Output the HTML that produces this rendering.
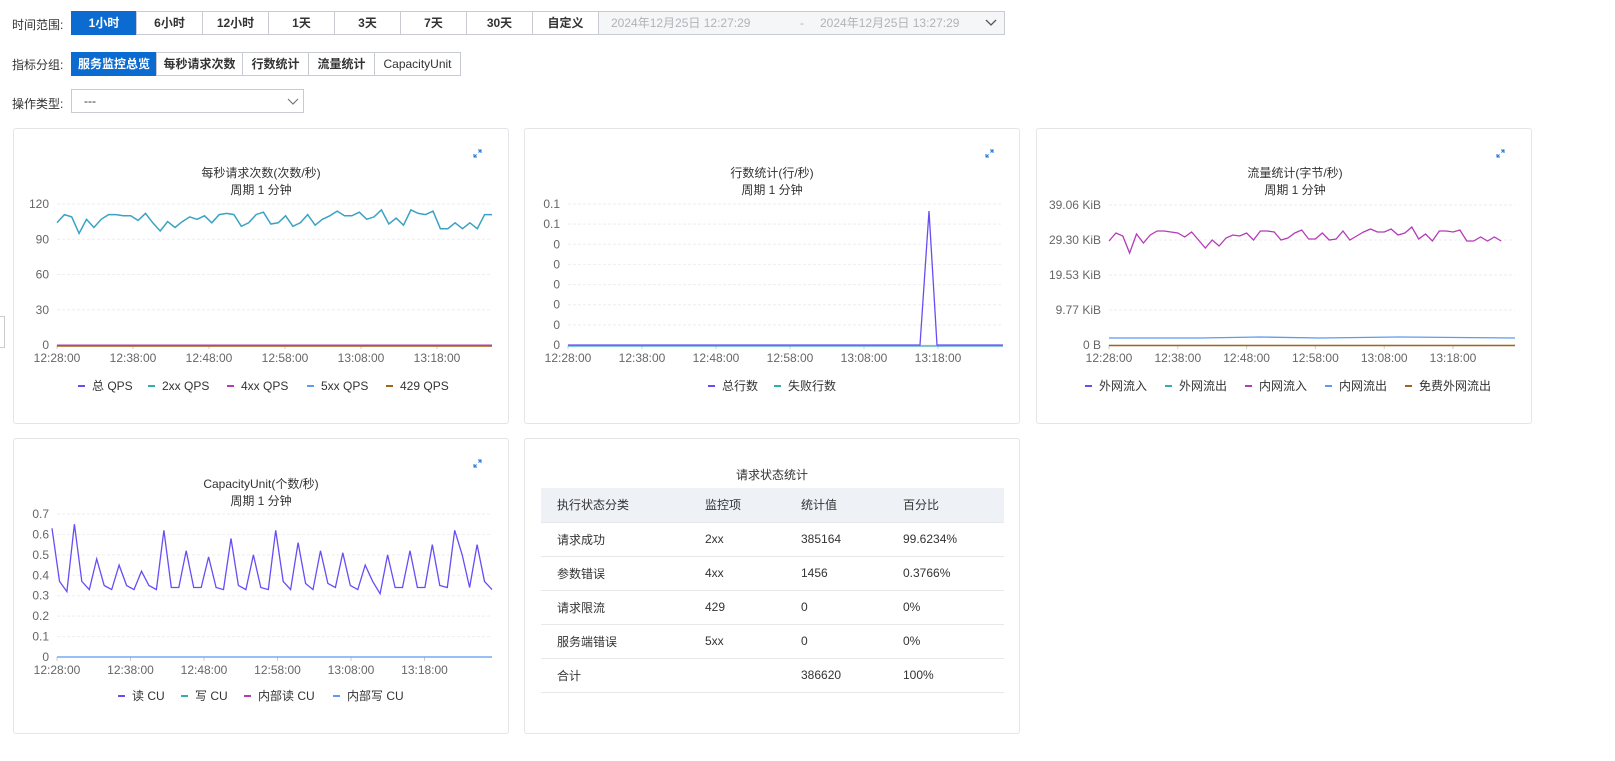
<!DOCTYPE html>
<html><head><meta charset="utf-8"><style>
*{box-sizing:border-box;margin:0;padding:0}
body{width:1615px;height:761px;background:#fff;font-family:"Liberation Sans","Noto Sans CJK SC",sans-serif;font-size:12px;color:#333;position:relative;overflow:hidden}
.a{position:absolute}
.lbl{position:absolute;left:12px;font-size:12px;color:#333}
.btn{position:absolute;height:24px;border:1px solid #c8ccd2;background:#fff;text-align:center;line-height:22px;font-size:12px;font-weight:bold;color:#333}
.btn.on{background:#0c6bd1;border-color:#0c6bd1;color:#fff}
.card{position:absolute;border:1px solid #e3e5e8;border-radius:3px;background:#fff}
table{border-collapse:collapse;position:absolute;left:541px;top:488px;width:463px;font-size:12px;color:#333}
td{height:34px;border-bottom:1px solid #e6e8eb;padding-left:16px}
tr.h td{background:#eef1f5;height:34px}
</style></head><body>
<div class="lbl" style="top:16px">时间范围:</div>
<div class="btn on" style="left:71px;top:11px;width:66px">1小时</div>
<div class="btn" style="left:136px;top:11px;width:67px">6小时</div>
<div class="btn" style="left:202px;top:11px;width:67px">12小时</div>
<div class="btn" style="left:268px;top:11px;width:67px">1天</div>
<div class="btn" style="left:334px;top:11px;width:67px">3天</div>
<div class="btn" style="left:400px;top:11px;width:67px">7天</div>
<div class="btn" style="left:466px;top:11px;width:67px">30天</div>
<div class="btn" style="left:532px;top:11px;width:67px">自定义</div>
<div class="a" style="left:598px;top:11px;width:407px;height:24px;border:1px solid #c8ccd2;background:#f5f6f8;color:#b0b3b8;line-height:22px;font-size:12px">
<span class="a" style="left:12px">2024年12月25日 12:27:29</span><span class="a" style="left:201px">-</span><span class="a" style="left:221px">2024年12月25日 13:27:29</span>
<svg class="a" style="left:386px;top:7px" width="12" height="8"><path d="M1 1L6 6L11 1" fill="none" stroke="#555" stroke-width="1.3"/></svg></div>

<div class="lbl" style="top:56px">指标分组:</div>
<div class="btn on" style="left:71px;top:52px;width:86px">服务监控总览</div>
<div class="btn" style="left:156px;top:52px;width:87px">每秒请求次数</div>
<div class="btn" style="left:242px;top:52px;width:67px">行数统计</div>
<div class="btn" style="left:308px;top:52px;width:67px">流量统计</div>
<div class="btn" style="left:374px;top:52px;width:87px;font-weight:normal">CapacityUnit</div>

<div class="lbl" style="top:95px">操作类型:</div>
<div class="a" style="left:71px;top:89px;width:233px;height:24px;border:1px solid #c8ccd2;line-height:22px;padding-left:12px">---
<svg class="a" style="left:215px;top:8px" width="12" height="8"><path d="M1 1L6 6L11 1" fill="none" stroke="#777" stroke-width="1.2"/></svg></div>
<div class="a" style="left:0;top:316px;width:5px;height:32px;border:1px solid #ccc;border-left:none"></div>

<div class="card" style="left:13px;top:128px;width:496px;height:296px"></div>
<div class="card" style="left:524px;top:128px;width:496px;height:296px"></div>
<div class="card" style="left:1036px;top:128px;width:496px;height:296px"></div>
<div class="card" style="left:13px;top:438px;width:496px;height:296px"></div>
<div class="card" style="left:524px;top:438px;width:496px;height:296px"></div>

<div class="a" style="left:524px;top:466px;width:496px;text-align:center">请求状态统计</div>
<table>
<tr class="h"><td style="width:148px">执行状态分类</td><td style="width:96px">监控项</td><td style="width:102px">统计值</td><td>百分比</td></tr>
<tr><td>请求成功</td><td>2xx</td><td>385164</td><td>99.6234%</td></tr>
<tr><td>参数错误</td><td>4xx</td><td>1456</td><td>0.3766%</td></tr>
<tr><td>请求限流</td><td>429</td><td>0</td><td>0%</td></tr>
<tr><td>服务端错误</td><td>5xx</td><td>0</td><td>0%</td></tr>
<tr><td>合计</td><td></td><td>386620</td><td>100%</td></tr>
</table>

<svg id="s" class="a" style="left:0;top:0" width="1615" height="761" font-family="Liberation Sans, Noto Sans CJK SC, sans-serif" font-size="12"></svg>
<script>
var s=document.getElementById('s'),h='';
function t(x,y,str,anc,col,sz){h+='<text x="'+x+'" y="'+y+'" text-anchor="'+(anc||'middle')+'" fill="'+(col||'#333')+'" font-size="'+(sz||12)+'">'+str+'</text>';}
function pl(pts,c,w){h+='<polyline fill="none" stroke="'+c+'" stroke-width="'+(w||1.3)+'" points="'+pts.map(p=>p[0].toFixed(1)+','+p[1].toFixed(1)).join(' ')+'"/>';}
function expand(x,y){h+='<g stroke="#1a6fd6" stroke-width="1" fill="none"><path d="M'+(x+1)+' '+(y+7)+'L'+(x+3.5)+' '+(y+4.5)+'M'+(x+5.5)+' '+(y+2.5)+'L'+(x+8)+' '+y+'M'+(x+5)+' '+y+'H'+(x+8)+'V'+(y+3)+'M'+(x+1)+' '+(y+4)+'V'+(y+7)+'H'+(x+4)+'"/></g>';}
function chart(o){
 var cx=o.cx;t(cx,o.ty,o.title);if(o.sub)t(cx,o.ty+17,o.sub);
 o.yl.forEach((l,i)=>{var y=o.y0-(o.y0-o.y1)*i/(o.yl.length-1);
  h+='<line x1="'+o.x0+'" x2="'+o.x1+'" y1="'+y+'" y2="'+y+'" stroke="#eee" stroke-dasharray="'+(i?'3,2':'0')+'"/>';
  t(o.x0-8,y+4,l,'end','#666');});
 var xs=['12:28:00','12:38:00','12:48:00','12:58:00','13:08:00','13:18:00'];
 xs.forEach((l,i)=>{var x=o.x0+o.dx*i;h+='<line x1="'+x+'" x2="'+x+'" y1="'+o.y0+'" y2="'+(o.y0+4)+'" stroke="#ccc"/>';t(x,o.y0+17,l,'middle','#666');});
 var lx=o.lx;o.leg.forEach(g=>{h+='<line x1="'+lx+'" x2="'+(lx+7)+'" y1="'+(o.ly-4)+'" y2="'+(o.ly-4)+'" stroke="'+g[1]+'" stroke-width="2"/>';t(lx+14,o.ly,g[0],'start','#333');lx+=g[2];});
 expand(o.ex,o.ey);
}
function series(vals,x0,x1,f){return vals.map((v,i)=>[x0+(x1-x0)*i/(vals.length-1),f(v)]);}
var q=[104,111,109,95,107,100,107,111,111,110,110,106,112,104,97,105,100,105,109,107,110,104,111,112,111,101,104,111,113,103,104,110,101,104,111,102,107,110,114,110,110,113,107,109,115,103,108,102,115,112,111,114,99,99,104,99,104,99,111,111];
chart({cx:261,ty:177,title:'每秒请求次数(次数/秒)',sub:'周期 1 分钟',x0:57,x1:492,y0:345,y1:204,yl:['0','30','60','90','120'],dx:76,lx:78,ly:390,leg:[['总 QPS','#6a4cf5',70],['2xx QPS','#2fb0a8',79],['4xx QPS','#b43bb8',80],['5xx QPS','#5b9bf0',79],['429 QPS','#a0651a',80]],ex:473,ey:150});
pl(series(q,57,492,v=>345-v*141/120),'#3aa3c4',1.5);
pl([[57,345],[492,345]],'#b43bb8',1);pl([[57,346],[492,346]],'#a0651a',1.5);

chart({cx:772,ty:177,title:'行数统计(行/秒)',sub:'周期 1 分钟',x0:568,x1:1003,y0:345,y1:204,yl:['0','0','0','0','0','0','0.1','0.1'],dx:74,lx:708,ly:390,leg:[['总行数','#6a4cf5',66],['失败行数','#2fb0a8',70]],ex:985,ey:150});
pl([[568,345],[920,345],[929,211],[937,345],[1003,345]],'#6a4cf5',1.3);
pl([[568,346],[1003,346]],'#3aa3c4',1.3);

var p=[241,233,236,253,234,243,235,231,231,232,233,237,232,240,248,240,246,238,235,236,233,240,231,231,232,240,238,233,230,239,239,233,240,239,231,240,236,232,229,232,232,229,235,233,227,239,234,241,231,231,232,230,241,241,237,241,237,241,233,233];
chart({cx:1295,ty:177,title:'流量统计(字节/秒)',sub:'周期 1 分钟',x0:1109,x1:1515,y0:345,y1:205,yl:['0 B','9.77 KiB','19.53 KiB','29.30 KiB','39.06 KiB'],dx:68.8,lx:1085,ly:390,leg:[['外网流入','#6a4cf5',80],['外网流出','#2fb0a8',80],['内网流入','#b43bb8',80],['内网流出','#5b9bf0',80],['免费外网流出','#a0651a',80]],ex:1496,ey:150});
var pp=series(p,1109,1515,v=>v);pp=pp.filter(a=>a[0]<=1508);pl(pp,'#b43bb8',1.3);
pl([[1109,338],[1200,338],[1260,337],[1320,338],[1400,337],[1515,338]],'#5b9bf0',1.3);
pl([[1109,345.5],[1515,345.5]],'#a0651a',1.5);

var c=[0.63,0.37,0.32,0.65,0.37,0.33,0.48,0.35,0.33,0.45,0.35,0.33,0.42,0.35,0.33,0.62,0.34,0.34,0.52,0.34,0.34,0.49,0.34,0.33,0.58,0.35,0.33,0.5,0.34,0.33,0.62,0.37,0.33,0.56,0.36,0.33,0.52,0.36,0.34,0.51,0.35,0.33,0.45,0.37,0.31,0.5,0.34,0.34,0.52,0.34,0.34,0.55,0.35,0.34,0.62,0.5,0.34,0.53,0.34,0.34];
chart({cx:261,ty:488,title:'CapacityUnit(个数/秒)',sub:'周期 1 分钟',x0:57,x1:492,y0:657,y1:514,yl:['0','0.1','0.2','0.3','0.4','0.5','0.6','0.7'],dx:73.5,lx:118,ly:700,leg:[['读 CU','#6a4cf5',63],['写 CU','#2fb0a8',63],['内部读 CU','#b43bb8',89],['内部写 CU','#5b9bf0',80]],ex:473,ey:460});
c[57]=0.55;c[58]=0.37;c[59]=0.33;
pl(series(c,52,492,v=>657-v*143/0.7),'#6a4cf5',1.3);
pl([[57,657],[492,657]],'#5b9bf0',1.3);
s.innerHTML=h;
</script>
</body></html>
